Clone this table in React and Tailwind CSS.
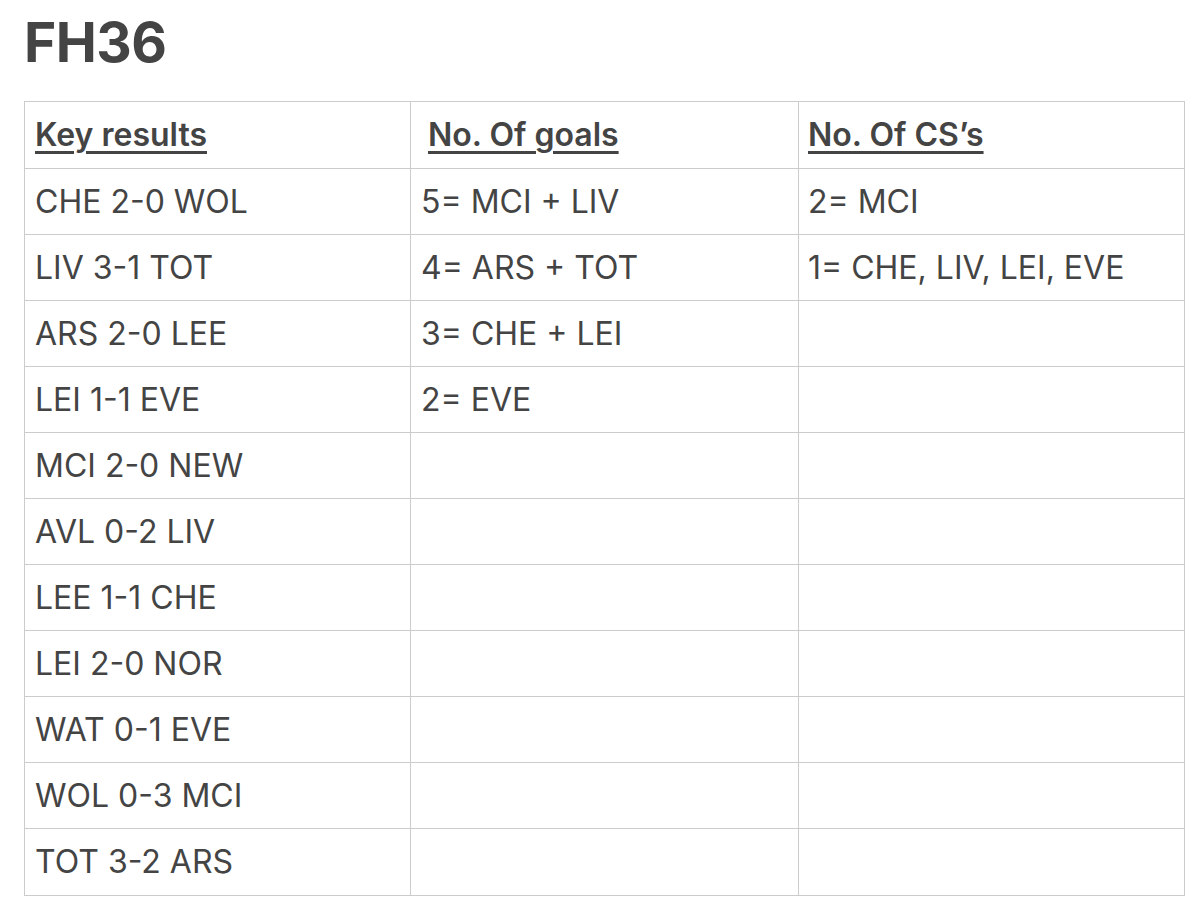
export default function App() {
  const rows = [
    ["CHE 2-0 WOL", "5= MCI + LIV", "2= MCI"],
    ["LIV 3-1 TOT", "4= ARS + TOT", "1= CHE, LIV, LEI, EVE"],
    ["ARS 2-0 LEE", "3= CHE + LEI", ""],
    ["LEI 1-1 EVE", "2= EVE", ""],
    ["MCI 2-0 NEW", "", ""],
    ["AVL 0-2 LIV", "", ""],
    ["LEE 1-1 CHE", "", ""],
    ["LEI 2-0 NOR", "", ""],
    ["WAT 0-1 EVE", "", ""],
    ["WOL 0-3 MCI", "", ""],
    ["TOT 3-2 ARS", "", ""],
  ]

  return (
    <div className="min-h-screen bg-white pl-[24px] pr-[15px] pt-[10px] text-[#444444] font-['Inter','Liberation_Sans',sans-serif]">
      <h1 className="text-[55px] font-bold leading-[64px] tracking-[-0.5px]">FH36</h1>
      <table className="mt-[27px] w-[1161px] border-collapse table-fixed text-[32px]">
        <thead>
          <tr className="h-[67px]">
            <th className="w-[386px] border border-[#cccccc] px-[10px] text-left font-semibold">
              <span className="underline decoration-[2.5px] underline-offset-[5px]">Key results</span>
            </th>
            <th className="w-[388px] border border-[#cccccc] pl-[17px] pr-[10px] text-left font-semibold">
              <span className="underline decoration-[2.5px] underline-offset-[5px]">No. Of goals</span>
            </th>
            <th className="border border-[#cccccc] px-[9px] text-left font-semibold">
              <span className="underline decoration-[2.5px] underline-offset-[5px]">No. Of CS’s</span>
            </th>
          </tr>
        </thead>
        <tbody>
          {rows.map((r, i) => (
            <tr key={i} className={i === rows.length - 1 ? "h-[67px]" : "h-[66px]"}>
              <td className="border border-[#cccccc] px-[10px]">{r[0]}</td>
              <td className="border border-[#cccccc] px-[10px]">{r[1]}</td>
              <td className="border border-[#cccccc] px-[9px]">{r[2]}</td>
            </tr>
          ))}
        </tbody>
      </table>
    </div>
  )
}
